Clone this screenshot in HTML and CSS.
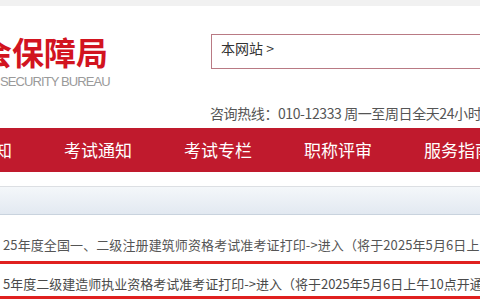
FILE: index.html
```html
<!DOCTYPE html>
<html lang="zh-CN">
<head>
<meta charset="utf-8">
<title>社会保障局</title>
<link rel="stylesheet" href="styles.css">
</head>
<body>
<div class="topbar"></div>
<header class="header">
  <div class="logo">
    <div class="logo-cn">社会保障局</div>
    <div class="logo-en">SECURITY BUREAU</div>
  </div>
  <div class="side">
    <div class="search">本网站 &gt;</div>
    <div class="hotline">咨询热线：010-12333 周一至周日全天24小时</div>
  </div>
</header>
<nav class="nav">
  <a class="nav-item first">知</a>
  <a class="nav-item">考试通知</a>
  <a class="nav-item">考试专栏</a>
  <a class="nav-item">职称评审</a>
  <a class="nav-item">服务指南</a>
</nav>
<div class="band"></div>
<ul class="list">
  <li class="row">25年度全国一、二级注册建筑师资格考试准考证打印-&gt;进入（将于2025年5月6日上</li>
  <li class="row boxed">5年度二级建造师执业资格考试准考证打印-&gt;进入（将于2025年5月6日上午10点开通</li>
</ul>
</body>
</html>
```
FILE: styles.css
```css
html, body {
  margin: 0;
  padding: 0;
  background: #fff;
  width: 480px;
  height: 300px;
  overflow: hidden;
  font-family: "Noto Sans CJK SC", "Noto Sans", sans-serif;
}

.topbar {
  height: 6px;
  background: #f1f1f1;
}

.header {
  display: flex;
  align-items: flex-start;
  margin-left: -52px;
}

.logo {
  width: 263px;
  flex: 0 0 263px;
  padding-top: 29px;
}

.logo-cn {
  font-size: 32px;
  line-height: 32px;
  font-weight: bold;
  color: #d2141f;
  white-space: nowrap;
}

.logo-en {
  margin-top: 7px;
  margin-left: 52px;
  font-family: "Liberation Sans", Arial, sans-serif;
  font-size: 13px;
  line-height: 16px;
  letter-spacing: -0.9px;
  color: #9a9a9a;
  white-space: nowrap;
}

.side {
  flex: 0 0 400px;
  padding-top: 28px;
}

.search {
  height: 35px;
  box-sizing: border-box;
  border: 1px solid #b97a84;
  padding: 3px 9px;
  font-size: 14px;
  line-height: 20px;
  color: #333;
}

.hotline {
  margin-top: 34px;
  margin-left: -1px;
  font-size: 14px;
  line-height: 20px;
  letter-spacing: -0.4px;
  color: #555;
  white-space: nowrap;
}

.nav {
  display: flex;
  gap: 52px;
  margin-top: 5px;
  height: 44px;
  background: #c01a2d;
  padding-left: 0;
  margin-left: -56px;
  width: 700px;
}

.nav-item {
  flex: 0 0 68px;
  font-size: 17px;
  line-height: 44px;
  color: #fff;
  white-space: nowrap;
}

.nav-item.first {
  text-align: right;
}

.band {
  margin-top: 14px;
  height: 27px;
  border-top: 1px solid #dcdfe3;
  border-bottom: 1px solid #c9d3de;
  background: linear-gradient(#f4f7fa, #e2e9f1);
}

.list {
  list-style: none;
  margin: 20px 0 0;
  padding: 0;
}

.row {
  font-size: 13px;
  line-height: 20px;
  color: #555;
  white-space: nowrap;
  padding-left: 3px;
  letter-spacing: 0.1px;
}

.row.boxed {
  margin-top: 6px;
  margin-left: -20px;
  width: 600px;
  padding: 10px 0 2px 20px;
  border: 3px solid #e0201f;
  color: #4a4a4a;
  letter-spacing: 0;
}
```
